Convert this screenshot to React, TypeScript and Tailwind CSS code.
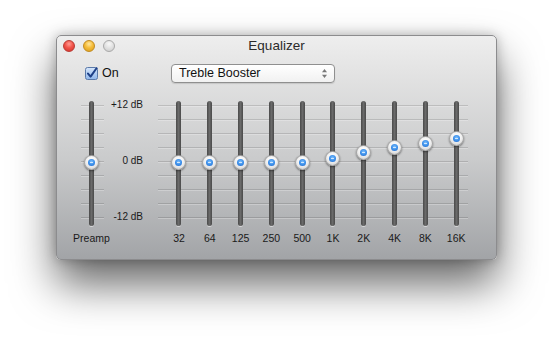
import React from "react";

const bands: { label: string; off: number }[] = [
  { label: "32", off: 0 },
  { label: "64", off: 0 },
  { label: "125", off: 0 },
  { label: "250", off: 0 },
  { label: "500", off: 0 },
  { label: "1K", off: -4 },
  { label: "2K", off: -10.5 },
  { label: "4K", off: -15.5 },
  { label: "8K", off: -19 },
  { label: "16K", off: -24.5 },
];

const font = { fontFamily: '"Liberation Sans", Arial, sans-serif' };

function Knob({ off }: { off: number }) {
  return (
    <div
      className="absolute left-1/2 w-[15px] h-[15px] -ml-[7.5px] -mt-[7.5px] rounded-full border border-[rgba(0,0,0,0.28)] bg-[radial-gradient(circle_at_50%_35%,#ffffff_0%,#f2f2f2_45%,#c9c9c9_100%)] shadow-[0_1px_2px_rgba(0,0,0,0.45)] flex items-center justify-center"
      style={{ top: 61.5 + off }}
    >
      <div className="w-[7px] h-[7px] rounded-full bg-[radial-gradient(circle_at_50%_40%,#7cc0ff_0%,#3a8de8_55%,#1a5fc4_100%)] flex items-center justify-center">
        <div className="w-[3px] h-[1px] bg-white/70" />
      </div>
    </div>
  );
}

function Track() {
  return (
    <div className="w-[5px] h-[125px] rounded-full bg-[linear-gradient(to_right,#4a4a4a,#6a6a6a_50%,#4a4a4a)] shadow-[0_1px_0_rgba(255,255,255,0.5)]" />
  );
}

function Lines({ className }: { className: string }) {
  return (
    <div className={"absolute top-[4px] h-[113px] flex flex-col justify-between " + className}>
      {Array.from({ length: 9 }).map((_, i) => (
        <div key={i} className="h-[1px] w-full bg-[rgba(0,0,0,0.13)] shadow-[0_1px_0_rgba(255,255,255,0.25)]" />
      ))}
    </div>
  );
}

function Slider({ label, off }: { label: string; off: number }) {
  return (
    <div className="flex flex-col items-center">
      <div className="relative h-[125px] w-full flex justify-center">
        <Track />
        <Knob off={off} />
      </div>
      <div className="mt-[6px] text-[10.5px] leading-[12px] text-[#1a1a1a] whitespace-nowrap">{label}</div>
    </div>
  );
}

export default function App() {
  return (
    <div className="w-[554px] h-[339px] bg-white pt-[35px] pl-[56px]" style={font}>
      <div className="w-[441px] h-[225px] rounded-[5px] border border-[#8c8c8e] bg-[linear-gradient(to_bottom,#eeeeee_0%,#e4e4e4_15%,#cacbcc_55%,#a2a4a7_100%)] shadow-[0_24px_44px_rgba(0,0,0,0.6),0_0_12px_rgba(0,0,0,0.25)] flex flex-col overflow-hidden">
        {/* title bar */}
        <div className="relative h-[20px] flex items-center pl-[6px] shrink-0">
          <div className="flex gap-[8px]">
            <div className="w-[12px] h-[12px] rounded-full border border-[#b83a33] bg-[radial-gradient(circle_at_50%_30%,#ff9c94_0%,#f2554b_45%,#d0302a_100%)]" />
            <div className="w-[12px] h-[12px] rounded-full border border-[#c08a20] bg-[radial-gradient(circle_at_50%_30%,#ffe7a0_0%,#f5bd3a_45%,#d99a1c_100%)]" />
            <div className="w-[12px] h-[12px] rounded-full border border-[#a9a9a9] bg-[radial-gradient(circle_at_50%_30%,#f8f8f8_0%,#dcdcdc_60%,#c8c8c8_100%)]" />
          </div>
          <div className="absolute inset-0 flex items-center justify-center text-[13.5px] text-[#2a2a2a] pointer-events-none">
            Equalizer
          </div>
        </div>

        {/* controls row */}
        <div className="flex items-center h-[19px] mt-[8px] shrink-0">
          <div className="ml-[28px] flex items-center gap-[4px] w-[86px]">
            <svg width="13" height="13" viewBox="0 0 13 13">
              <defs>
                <linearGradient id="cb" x1="0" y1="0" x2="0" y2="1">
                  <stop offset="0" stopColor="#d6e6fb" />
                  <stop offset="1" stopColor="#8fb6ea" />
                </linearGradient>
              </defs>
              <rect x="0.5" y="0.5" width="12" height="12" rx="2" fill="url(#cb)" stroke="#5a79a8" />
              <path d="M3 6.6 L5.6 9.6 L11.5 1.2" fill="none" stroke="#1d3f86" strokeWidth="2" strokeLinecap="round" strokeLinejoin="round" />
            </svg>
            <span className="text-[12.5px] text-[#111]">On</span>
          </div>
          <div className="w-[164px] h-[19px] rounded-[4px] border border-[#8f8f8f] bg-[linear-gradient(to_bottom,#ffffff,#f1f1f1)] shadow-[0_1px_1px_rgba(0,0,0,0.12)] flex items-center pl-[7px] pr-[6px] justify-between">
            <span className="text-[12.5px] text-[#111]">Treble Booster</span>
            <svg width="7" height="11" viewBox="0 0 7 11">
              <path d="M3.5 1 L6 4.3 L1 4.3 Z" fill="#777" />
              <path d="M3.5 10 L6 6.7 L1 6.7 Z" fill="#777" />
            </svg>
          </div>
        </div>

        {/* eq area */}
        <div className="flex mt-[18px]">
          <div className="relative ml-[15px] w-[39px]">
            <Lines className="left-[9px] w-[23px]" />
            <div className="relative">
              <Slider label="Preamp" off={0} />
            </div>
          </div>
          <div className="w-[32px] h-[124px] -mt-[2px] flex flex-col justify-between items-end text-[10px] leading-[12px] text-[#1a1a1a] whitespace-nowrap">
            <span>+12 dB</span>
            <span>0 dB</span>
            <span>-12 dB</span>
          </div>
          <div className="relative ml-[20.6px] flex">
            <Lines className="left-[-6px] right-[4px]" />
            {bands.map((b) => (
              <div key={b.label} className="relative w-[30.8px]">
                <Slider label={b.label} off={b.off} />
              </div>
            ))}
          </div>
        </div>
      </div>
    </div>
  );
}
